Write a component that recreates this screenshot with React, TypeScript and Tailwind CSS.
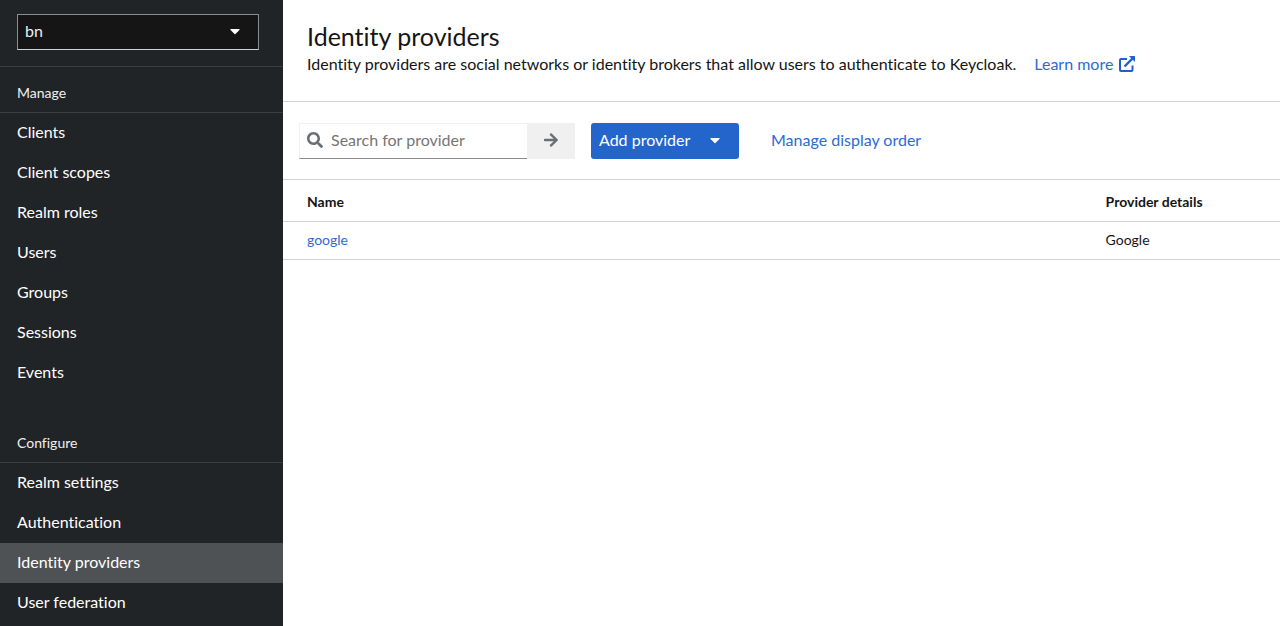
import { FaArrowRight, FaCaretDown, FaSearch } from "react-icons/fa";

const sections = [
  {
    title: "Manage",
    items: ["Clients", "Client scopes", "Realm roles", "Users", "Groups", "Sessions", "Events"],
  },
  {
    title: "Configure",
    items: ["Realm settings", "Authentication", "Identity providers", "User federation"],
  },
];

const current = "Identity providers";

function ExternalLinkIcon() {
  return (
    <svg viewBox="0 0 16 16" className="size-4" aria-hidden="true">
      <path
        d="M8 3H2a1 1 0 0 0-1 1v10a1 1 0 0 0 1 1h10.500a1 1 0 0 0 1-1V9.500"
        fill="none"
        stroke="#2160cc"
        strokeWidth="2"
      />
      <path d="M5.500 10.500L13.500 2.500" fill="none" stroke="#2160cc" strokeWidth="2.400" />
      <path d="M10 0h5.500a.5.5 0 0 1 .5.500V6z" fill="#2160cc" />
    </svg>
  );
}

function Sidebar() {
  return (
    <aside className="w-[283px] shrink-0 bg-[#212427] text-white">
      <div className="border-b border-[#3c3f42] pt-3.5 pr-6 pb-4 pl-[17px]">
        <div className="relative">
          <select
            aria-label="Realm"
            className="block h-9 w-full appearance-none border border-[#8a8d90] border-b-[#d2d2d2] bg-[#151515] px-[7px] pb-0.5 text-[#f0f0f0]"
          >
            <option>bn</option>
          </select>
          <FaCaretDown className="pointer-events-none absolute top-[9px] right-4" />
        </div>
      </div>
      <nav aria-label="Main" className="flex flex-col gap-6">
        {sections.map((section) => (
          <section key={section.title}>
            <h2 className="border-b border-[#3c3f42] pt-[15px] pb-[9px] pl-[17px] text-sm leading-[21px] text-[#f0f0f0]">
              {section.title}
            </h2>
            <ul>
              {section.items.map((item) => (
                <li key={item}>
                  <a
                    href="#"
                    aria-current={item === current ? "page" : undefined}
                    className="block pt-[7px] pb-[9px] pl-[17px] leading-6 aria-[current=page]:bg-[#4f5255]"
                  >
                    {item}
                  </a>
                </li>
              ))}
            </ul>
          </section>
        ))}
      </nav>
    </aside>
  );
}

function Toolbar() {
  return (
    <div className="flex items-center px-4 pt-[21px] pb-5">
      <form className="flex" onSubmit={(e) => e.preventDefault()}>
        <div className="relative">
          <FaSearch className="pointer-events-none absolute top-[9px] left-2 text-[#6a6e73]" />
          <input
            type="search"
            aria-label="Search for provider"
            placeholder="Search for provider"
            className="block h-9 w-[228px] border border-r-0 border-[#f0f0f0] border-b-[#8a8d90] pr-2 pb-[3px] pl-[31px] placeholder:text-[#757575]"
          />
        </div>
        <button
          type="submit"
          aria-label="Search"
          className="flex w-12 items-center justify-center bg-[#f0f0f0] pb-0.5 text-[#6a6e73]"
        >
          <FaArrowRight />
        </button>
      </form>
      <button
        type="button"
        className="ml-4 flex h-9 w-[148px] items-center justify-between rounded-[3px] bg-[#2465cc] pr-4 pb-0.5 pl-2 text-white"
      >
        Add provider
        <FaCaretDown />
      </button>
      <button type="button" className="ml-8 pb-0.5 text-[#2b6cd4]">
        Manage display order
      </button>
    </div>
  );
}

export default function App() {
  return (
    <div className="flex h-screen overflow-hidden bg-white font-['Lato',sans-serif] text-base text-[#151515] [font-variant-ligatures:none]">
      <Sidebar />
      <main className="min-w-0 flex-1">
        <header className="border-b border-[#d2d2d2] px-6 pt-[21px] pb-[25px]">
          <h1 className="text-[25px] leading-[31px]">Identity providers</h1>
          <p className="flex items-center gap-[18px] leading-6">
            Identity providers are social networks or identity brokers that allow users to authenticate to Keycloak.
            <a href="#" className="flex items-center gap-1.5 text-[#2b6cd4]">
              Learn more
              <ExternalLinkIcon />
            </a>
          </p>
        </header>
        <Toolbar />
        <table className="w-full table-fixed border-t border-[#d2d2d2] text-left text-sm leading-[21px]">
          <thead>
            <tr className="border-b border-[#d2d2d2]">
              <th className="w-4/5 pt-[11px] pb-[9px] pl-6 font-bold">Name</th>
              <th className="pt-[11px] pb-[9px] pl-[25px] font-bold">Provider details</th>
            </tr>
          </thead>
          <tbody>
            <tr className="border-b border-[#d2d2d2]">
              <td className="pt-[7px] pb-[9px] pl-6">
                <a href="#" className="text-[#2b6cd4]">
                  google
                </a>
              </td>
              <td className="pt-[7px] pb-[9px] pl-[25px]">Google</td>
            </tr>
          </tbody>
        </table>
      </main>
    </div>
  );
}
